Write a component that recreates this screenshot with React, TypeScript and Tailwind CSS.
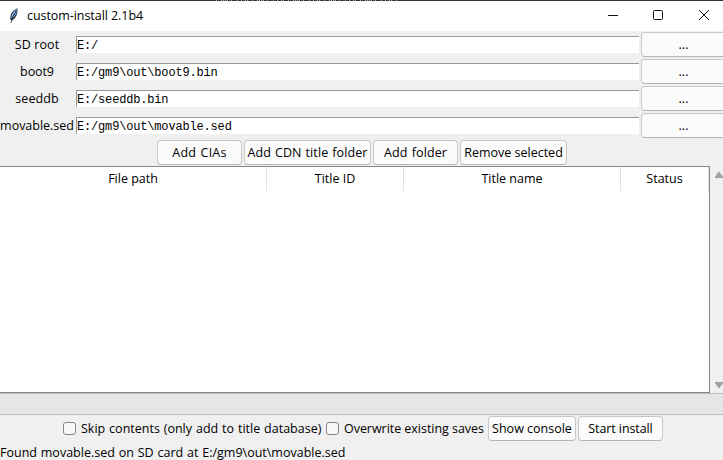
import React from "react";

const fields = [
  { label: "SD root", value: "E:/", track: "tracking-[0.1px]" },
  { label: "boot9", value: "E:/gm9\\out\\boot9.bin", track: "tracking-[-0.1px]" },
  { label: "seeddb", value: "E:/seeddb.bin", track: "tracking-[0.1px]" },
  { label: "movable.sed", value: "E:/gm9\\out\\movable.sed", track: "tracking-[-0.02px]" },
];

const columns = [
  { name: "File path", width: "w-[267px]" },
  { name: "Title ID", width: "w-[137px]" },
  { name: "Title name", width: "w-[217px]" },
  { name: "Status", width: "w-[88px]" },
];

function Button({ children, className }: { children: React.ReactNode; className: string }) {
  return (
    <button
      className={`flex h-[25px] shrink-0 items-center justify-center whitespace-nowrap rounded-[4px] border border-[#c8c8c8] border-b-[#b4b4b4] bg-[#fbfbfb] ${className}`}
    >
      {children}
    </button>
  );
}

function Checkbox({ label, className }: { label: string; className: string }) {
  return (
    <label className={`flex shrink-0 items-center whitespace-nowrap ${className}`}>
      <span className="mr-[5px] size-[13px] shrink-0 rounded-[3px] border border-[#858585] bg-[#f8f8f8]" />
      {label}
    </label>
  );
}

function Feather() {
  return (
    <svg width="10" height="16" viewBox="0 0 10 16" className="shrink-0">
      <path d="M8.4.4C5.4 1 2.4 4.2 1.5 7.8L1.2 11.5 3 12.3C6 10.8 9.3 6 8.4.4Z" fill="#2a3440" />
      <path d="M7.7 1.3C5.3 2.6 2.5 5.7 2.3 10.9 5.4 9.4 8.3 5.5 7.7 1.3Z" fill="#6aa3da" />
      <path d="M6.9 3.2Q3.6 7.5 2 15" fill="none" stroke="#17191c" strokeWidth=".8" />
      <path d="M5.4 4 4.6 5.6M3.7 6.4 3 8.5" stroke="#cce3f5" strokeWidth=".7" />
    </svg>
  );
}

export default function App() {
  return (
    <div className="flex h-[460px] w-[723px] flex-col overflow-hidden bg-[#f0f0f0] font-['Open_Sans','Noto_Sans',sans-serif] text-[12.5px] leading-4 text-black">
      <div className="h-px shrink-0 bg-[#343338]">
        <svg width="723" height="1" className="block">
          <path d="M216 .5h182" stroke="#aaa" strokeDasharray="1 4 1 1 1 1 1 1 1 3 1 5 1 3 1 3 1 1 1 4" />
        </svg>
      </div>
      <header className="flex h-[30px] shrink-0 items-center bg-white pl-[9px]">
        <Feather />
        <h1 className="ml-2 w-[570px] whitespace-nowrap tracking-[-0.06px]">custom-install 2.1b4</h1>
        <svg width="126" height="30" viewBox="597 1 126 30" fill="none" stroke="#111" className="shrink-0">
          <path d="M608 15.5h10" />
          <rect x="653.5" y="10.5" width="9" height="9" rx="1" />
          <path d="m699 10 10 10m0-10-10 10" />
        </svg>
      </header>

      <section className="shrink-0">
        {fields.map((f) => (
          <div key={f.label} className="flex h-[27px]">
            <span className={`w-[74px] shrink-0 whitespace-nowrap pt-[6px] text-center ${f.track}`}>{f.label}</span>
            <div className="ml-[2px] mt-[5px] h-[17px] w-[563px] shrink-0 overflow-hidden whitespace-pre border-l border-t border-[#999] bg-white pt-px font-['Liberation_Mono',monospace] text-[12px] tracking-[-0.17px]">
              {f.value}
            </div>
            <Button className="ml-[2px] mt-px w-[85px]">...</Button>
          </div>
        ))}
      </section>

      <section className="flex h-[27px] shrink-0 gap-[2px] pl-[157px] pt-px">
        <Button className="w-[85px] tracking-[0.2px] [word-spacing:1px]">Add CIAs</Button>
        <Button className="w-[127px] tracking-[0.1px] [word-spacing:0.6px]">Add CDN title folder</Button>
        <Button className="w-[85px] tracking-[0.1px] [word-spacing:1px]">Add folder</Button>
        <Button className="w-[107px]">Remove selected</Button>
      </section>

      <section className="flex h-[227px] shrink-0">
        <div className="w-[710px] shrink-0 border-b border-r border-t border-[#828790] bg-white">
          <div className="flex h-[24px]">
            {columns.map((c) => (
              <div key={c.name} className={`flex shrink-0 items-center justify-center border-r border-[#e1e1e1] ${c.width}`}>
                {c.name}
              </div>
            ))}
          </div>
        </div>
        <div className="flex flex-1 flex-col items-end justify-between pb-[4px] pt-[5px]">
          <svg width="8" height="8" viewBox="0 0 8 8" fill="#a0a0a0">
            <path d="M0 7V6L3.5.8h1L8 6v1Z" />
          </svg>
          <svg width="8" height="7" viewBox="0 0 8 7" fill="#a0a0a0">
            <path d="M0 0v1l3.5 5h1L8 1V0Z" />
          </svg>
        </div>
      </section>

      <div className="h-[22px] shrink-0 border-y border-[#bcbcbc] bg-[#e6e6e6]" />

      <section className="flex h-[27px] shrink-0 items-center pl-[63px]">
        <Checkbox className="w-[263px] [word-spacing:0.65px]" label="Skip contents (only add to title database)" />
        <Checkbox className="w-[162px] tracking-[-0.04px]" label="Overwrite existing saves" />
        <Button className="w-[88px]">Show console</Button>
        <Button className="ml-[2px] w-[85px] tracking-[-0.1px]">Start install</Button>
      </section>
      <footer className="whitespace-nowrap pt-[3px] [word-spacing:0.6px]">Found movable.sed on SD card at E:/gm9\out\movable.sed</footer>
    </div>
  );
}
